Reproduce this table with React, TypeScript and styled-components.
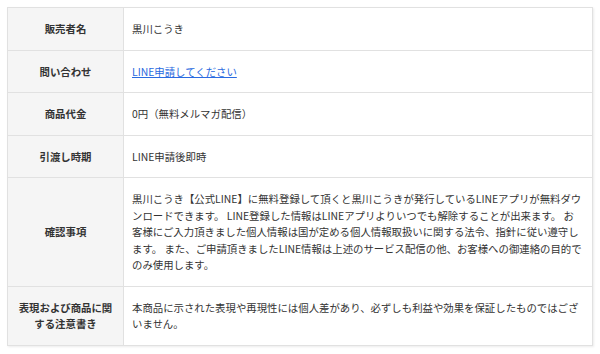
import styled, { createGlobalStyle } from "styled-components"

const GlobalStyle = createGlobalStyle`
    html, body {
        margin: 0;
        padding: 0;
        background: #ffffff;
    }
    body {
        font-family: "Noto Sans CJK JP", "Noto Sans", sans-serif;
        color: #333333;
    }
`

const Page = styled.div`
    padding: 7px 7px;
`

const Table = styled.table`
    width: 586px;
    table-layout: fixed;
    border-collapse: collapse;
    font-size: 10.4px;
    line-height: 16.5px;
    box-shadow: 1px 1px 2px rgba(0, 0, 0, 0.08);
`

const Head = styled.th`
    padding: 13px 8px 12px;
    background: #f5f5f5;
    border: 1px solid #e1e1e1;
    font-weight: 700;
    text-align: center;
    vertical-align: middle;
    color: #333333;
`

const Cell = styled.td`
    padding: 13px 8px 12px;
    background: #ffffff;
    border: 1px solid #e1e1e1;
    text-align: left;
    vertical-align: middle;
    color: #333333;
`

const Link = styled.a`
    color: #2a6ae0;
    text-decoration: underline;
`

interface Row {
    label: string
    value: React.ReactNode
}

function App() {
    const rows: Row[] = [
        { label: "販売者名", value: "黒川こうき" },
        {
            label: "問い合わせ",
            value: <Link href="#">LINE申請してください</Link>,
        },
        { label: "商品代金", value: "0円（無料メルマガ配信）" },
        { label: "引渡し時期", value: "LINE申請後即時" },
        {
            label: "確認事項",
            value:
                "黒川こうき【公式LINE】に無料登録して頂くと黒川こうきが発行しているLINEアプリが無料ダウンロードできます。 LINE登録した情報はLINEアプリよりいつでも解除することが出来ます。 お客様にご入力頂きました個人情報は国が定める個人情報取扱いに関する法令、指針に従い遵守します。 また、ご申請頂きましたLINE情報は上述のサービス配信の他、お客様への御連絡の目的でのみ使用します。",
        },
        {
            label: "表現および商品に関する注意書き",
            value: "本商品に示された表現や再現性には個人差があり、必ずしも利益や効果を保証したものではございません。",
        },
    ]

    return (
        <>
            <GlobalStyle />
            <Page>
                <Table>
                    <colgroup>
                        <col style={{ width: 116 }} />
                        <col />
                    </colgroup>
                    <tbody>
                        {rows.map((row) => (
                            <tr key={row.label}>
                                <Head>{row.label}</Head>
                                <Cell>{row.value}</Cell>
                            </tr>
                        ))}
                    </tbody>
                </Table>
            </Page>
        </>
    )
}

export default App
